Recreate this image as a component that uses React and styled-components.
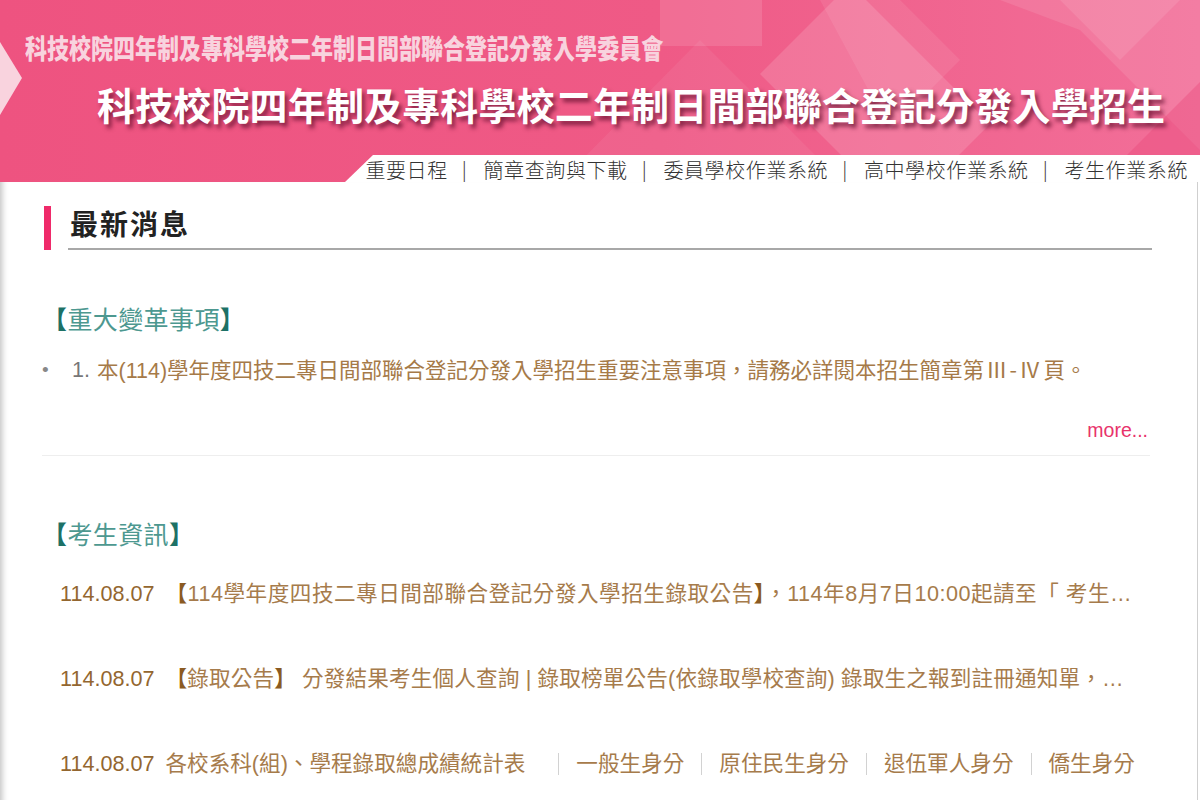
import styled, { createGlobalStyle } from 'styled-components';

const GlobalStyle = createGlobalStyle`
  html, body {
    margin: 0;
    padding: 0;
    background: #fff;
  }
  body {
    font-family: "Liberation Sans", "Noto Sans CJK TC", sans-serif;
  }
`;

// 상단 메뉴 목록
const navItems = ['重要日程', '簡章查詢與下載', '委員學校作業系統', '高中學校作業系統', '考生作業系統'];

const identityLinks = ['一般生身分', '原住民生身分', '退伍軍人身分', '僑生身分'];

const App = () => {
    return (
        <Page>
            <GlobalStyle />
            <Header>
                {/* 배경 장식 (분홍색 마름모) */}
                <HeaderArt viewBox="0 0 1200 182" preserveAspectRatio="none">
                    <defs>
                        <linearGradient id="bg" x1="0" y1="0" x2="1" y2="0">
                            <stop offset="0" stopColor="#ee5380" />
                            <stop offset="0.55" stopColor="#ef5a86" />
                            <stop offset="1" stopColor="#f26f99" />
                        </linearGradient>
                    </defs>
                    <rect width="1200" height="182" fill="url(#bg)" />
                    <rect x="660" y="0" width="102" height="46" fill="#fff" opacity="0.12" />
                    <polygon points="760,74 850,-16 990,124 900,214" fill="#fff" opacity="0.14" />
                    <polygon points="820,0 900,0 960,60 890,130" fill="#fff" opacity="0.08" />
                    <polygon points="1000,0 1200,0 1200,150 1080,30" fill="#fff" opacity="0.1" />
                    <polygon points="1060,0 1180,0 1120,60" fill="#fff" opacity="0.1" />
                    <polygon points="560,182 700,40 842,182" fill="#fff" opacity="0.06" />
                    <polygon points="1100,182 1200,82 1200,182" fill="#e84276" opacity="0.35" />
                    <polygon points="0,42 22,78 0,115" fill="#f9d3de" />
                </HeaderArt>
                <TitleSmall>科技校院四年制及專科學校二年制日間部聯合登記分發入學委員會</TitleSmall>
                <TitleMain>科技校院四年制及專科學校二年制日間部聯合登記分發入學招生</TitleMain>
                <NavBar>
                    {navItems.map((item, i) => (
                        <NavItem key={item}>
                            {i > 0 && <NavSep>|</NavSep>}
                            {item}
                        </NavItem>
                    ))}
                </NavBar>
            </Header>

            <Main>
                <SectionHead>
                    <HeadBar />
                    <HeadText>最新消息</HeadText>
                </SectionHead>

                <GroupTitle $top="54px">
                    <b>【</b>重大變革事項<b>】</b>
                </GroupTitle>
                <BulletList>
                    <BulletItem>
                        <BulletDot>•</BulletDot>
                        <BulletNum>1.</BulletNum>
                        <BulletText>
                            本(114)學年度四技二專日間部聯合登記分發入學招生重要注意事項，請務必詳閱本招生簡章第<Roman>Ⅲ-Ⅳ</Roman>頁。
                        </BulletText>
                    </BulletItem>
                </BulletList>
                <MoreRow>
                    <MoreLink>more...</MoreLink>
                </MoreRow>
                <Divider />

                <GroupTitle $top="63px">
                    <b>【</b>考生資訊<b>】</b>
                </GroupTitle>
                <NewsList>
                    <NewsRow>
                        <NewsDate>114.08.07</NewsDate>
                        <NewsTitle $spacing="0.5px">
                            <Strong>【</Strong>114學年度四技二專日間部聯合登記分發入學招生錄取公告<Strong>】</Strong>，114年8月7日10:00起請至「 考生…
                        </NewsTitle>
                    </NewsRow>
                    <NewsRow>
                        <NewsDate>114.08.07</NewsDate>
                        <NewsTitle $spacing="0.15px">
                            <Strong>【</Strong>錄取公告<Strong>】</Strong> 分發結果考生個人查詢 | 錄取榜單公告(依錄取學校查詢) 錄取生之報到註冊通知單，…
                        </NewsTitle>
                    </NewsRow>
                    <NewsRow>
                        <NewsDate>114.08.07</NewsDate>
                        <NewsTitle>
                            各校系科(組)、學程錄取總成績統計表
                            {identityLinks.map((item, i) => (
                                <span key={item}>
                                    <LinkSep $first={i === 0} />
                                    {item}
                                </span>
                            ))}
                        </NewsTitle>
                    </NewsRow>
                </NewsList>
            </Main>
        </Page>
    );
};

export default App;

export const Page = styled.div`
    width: 1200px;
    height: 800px;
    overflow: hidden;
    display: flex;
    flex-direction: column;
`;

export const Header = styled.header`
    position: relative;
    flex: none;
    height: 182px;
    overflow: hidden;
    display: flex;
    flex-direction: column;
`;

export const HeaderArt = styled.svg`
    position: absolute;
    left: 0;
    top: 0;
    width: 100%;
    height: 100%;
`;

export const TitleSmall = styled.div`
    position: relative;
    margin: 30px 0 0 25px;
    font-family: "Noto Sans CJK TC", sans-serif;
    font-size: 27px;
    font-weight: 900;
    line-height: 36px;
    color: #f8d3de;
    white-space: nowrap;
    transform: scaleX(0.815);
    transform-origin: left center;
`;

export const TitleMain = styled.div`
    position: relative;
    margin: 12px 0 0 97px;
    font-family: "Noto Sans CJK TC", sans-serif;
    font-size: 38px;
    font-weight: 700;
    line-height: 52px;
    letter-spacing: 0.15px;
    color: #fff;
    white-space: nowrap;
    text-shadow: 3px 4px 4px rgba(90, 10, 40, 0.7);
`;

export const NavBar = styled.nav`
    position: relative;
    margin-top: auto;
    align-self: flex-end;
    width: 855px;
    height: 27px;
    box-sizing: border-box;
    padding: 3px 12px 0 0;
    display: flex;
    justify-content: flex-end;
    background: #fff;
    clip-path: polygon(28px 0, 100% 0, 100% 100%, 0 100%);
`;

export const NavItem = styled.span`
    font-family: "Noto Sans CJK TC", sans-serif;
    font-size: 20px;
    font-weight: 300;
    line-height: 24px;
    letter-spacing: 0.6px;
    color: #333;
    white-space: nowrap;
`;

export const NavSep = styled.span`
    margin: 0 16px 0 14px;
`;

export const Main = styled.main`
    flex: 1;
    margin-right: 2px;
    padding: 24px 47px 0 42px;
    border-right: 1px solid #cfcfcf;
    box-shadow: inset 8px 0 6px -6px rgba(0, 0, 0, 0.25);
`;

export const SectionHead = styled.div`
    display: flex;
    height: 44px;
`;

export const HeadBar = styled.div`
    width: 7px;
    margin-left: 2px;
    background: #ef2a6a;
`;

export const HeadText = styled.h2`
    flex: 1;
    margin: 0 -2px 0 17px;
    padding: 0 0 8px 2px;
    border-bottom: 2px solid #a8a8a8;
    font-family: "Noto Sans CJK TC", sans-serif;
    font-size: 28px;
    font-weight: 700;
    line-height: 34px;
    letter-spacing: 2px;
    color: #222;
`;

export const GroupTitle = styled.h3`
    margin: ${(props) => props.$top} 0 0;
    font-size: 25px;
    font-weight: 400;
    line-height: 32px;
    letter-spacing: 0.4px;
    color: #4d9890;

    b {
        font-weight: 700;
        color: #1d7166;
    }
`;

export const BulletList = styled.ul`
    list-style: none;
    margin: 17px 0 0;
    padding: 0;
`;

export const BulletItem = styled.li`
    display: flex;
    align-items: center;
    font-size: 21.5px;
    line-height: 32px;
`;

export const BulletDot = styled.span`
    width: 30px;
    color: #888;
    font-size: 19px;
`;

export const BulletNum = styled.span`
    width: 25px;
    color: #777;
`;

export const BulletText = styled.span`
    color: #a67a48;
    white-space: nowrap;
`;

export const Roman = styled.span`
    font-family: "Noto Sans CJK TC", sans-serif;
    letter-spacing: 2px;
    margin: 0 1px 0 2px;
`;

export const MoreRow = styled.div`
    margin-top: 30px;
    display: flex;
    justify-content: flex-end;
    padding-right: 2px;
`;

export const MoreLink = styled.a`
    font-size: 19.5px;
    line-height: 26px;
    color: #e8336b;
    cursor: pointer;
`;

export const Divider = styled.hr`
    margin: 12px 0 0;
    border: none;
    border-top: 1px solid #eeeeee;
`;

export const NewsList = styled.div`
    display: flex;
    flex-direction: column;
    padding: 0 6px 0 18px;
`;

export const NewsRow = styled.div`
    height: 85px;
    display: flex;
    align-items: center;
    font-size: 21.6px;
    line-height: 30px;
`;

export const NewsDate = styled.span`
    flex: none;
    margin-right: 11px;
    color: #93662f;
`;

export const NewsTitle = styled.span`
    flex: 1;
    min-width: 0;
    overflow: hidden;
    white-space: nowrap;
    text-overflow: ellipsis;
    letter-spacing: ${(props) => props.$spacing || '0'};
    color: #a67b4b;
`;

export const Strong = styled.b`
    font-weight: 700;
    color: #8a5a22;
`;

export const LinkSep = styled.span`
    display: inline-block;
    width: 1px;
    height: 22px;
    vertical-align: -4px;
    background: #d2d2d2;
    margin: 0 17px 0 ${(props) => (props.$first ? '33px' : '17px')};
`;
